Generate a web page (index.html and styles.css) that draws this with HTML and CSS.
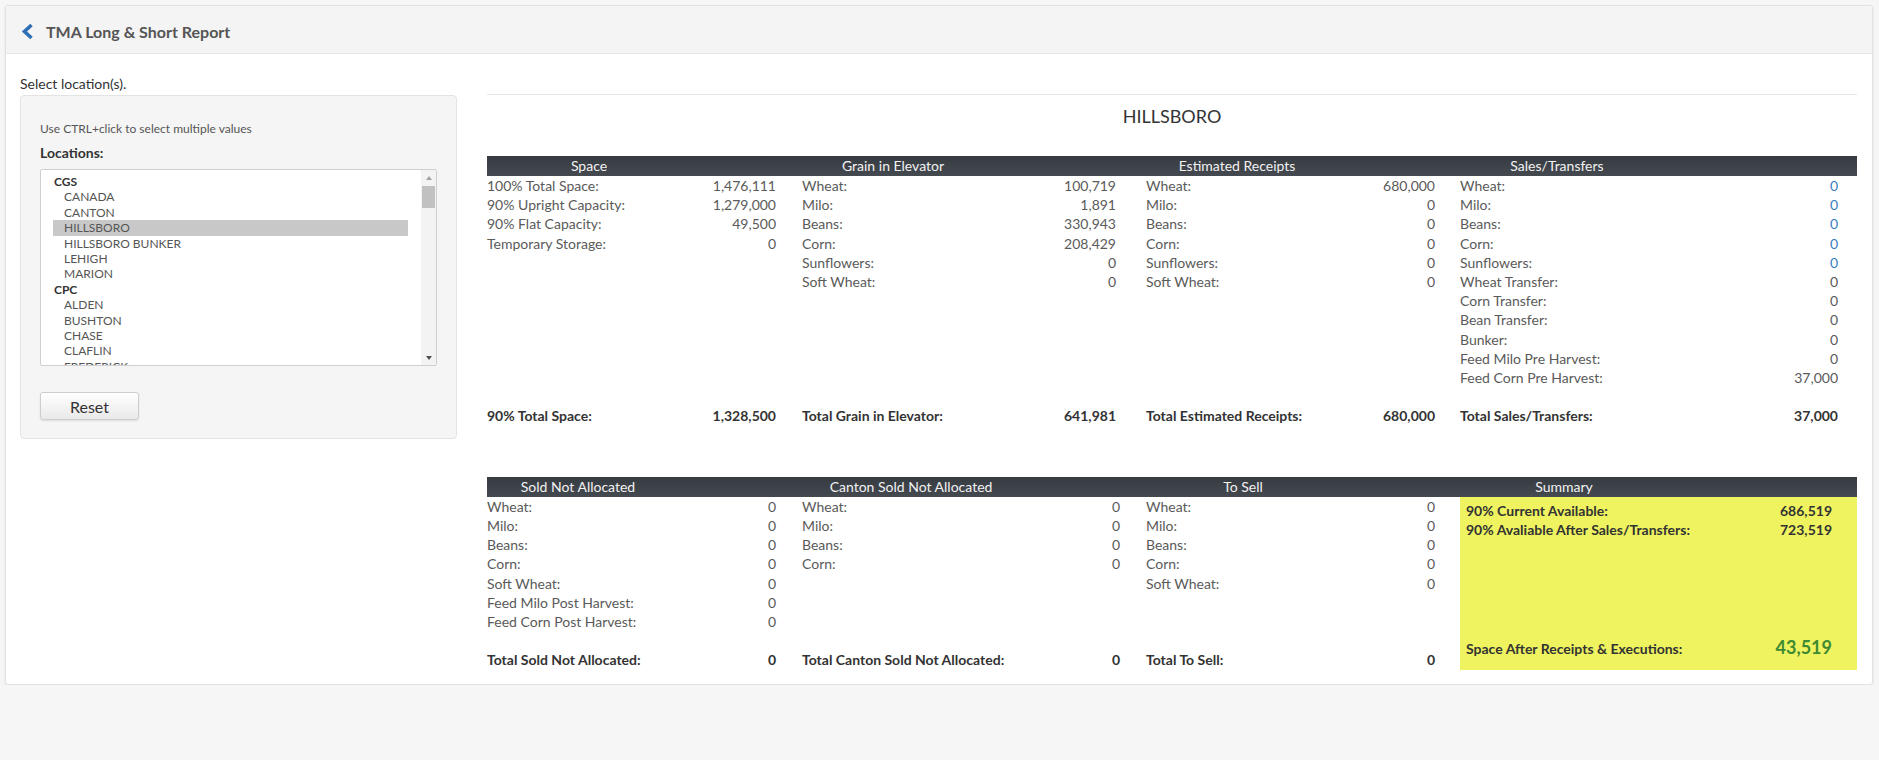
FILE: index.html
```html
<!DOCTYPE html>
<html>
<head>
<meta charset="utf-8">
<title>TMA Long &amp; Short Report</title>
<link rel="stylesheet" href="styles.css">
</head>
<body>
<div class="card">
  <div class="card-head">
    <svg class="back" width="13" height="17" viewBox="0 0 13 17"><polyline points="10.5,2 3.5,8.5 10.5,15" fill="none" stroke="#2e6fb5" stroke-width="3.6" stroke-linejoin="miter"/></svg>
    <span class="title">TMA Long &amp; Short Report</span>
  </div>
  <div class="card-body">
    <div class="left">
      <div class="sel-label">Select location(s).</div>
      <div class="panel">
        <div class="hint">Use CTRL+click to select multiple values</div>
        <div class="loc-label">Locations:</div>
        <div class="listbox">
          <div class="lb-list">
            <div class="og">CGS</div>
            <div class="opt">CANADA</div>
            <div class="opt">CANTON</div>
            <div class="opt sel">HILLSBORO</div>
            <div class="opt">HILLSBORO BUNKER</div>
            <div class="opt">LEHIGH</div>
            <div class="opt">MARION</div>
            <div class="og">CPC</div>
            <div class="opt">ALDEN</div>
            <div class="opt">BUSHTON</div>
            <div class="opt">CHASE</div>
            <div class="opt">CLAFLIN</div>
            <div class="opt">FREDERICK</div>
          </div>
          <div class="sb">
            <div class="sb-btn"><span class="tri-up"></span></div>
            <div class="sb-thumb"></div>
            <div class="sb-space"></div>
            <div class="sb-btn"><span class="tri-down"></span></div>
          </div>
        </div>
        <button class="reset">Reset</button>
      </div>
    </div>
    <div class="right">
      <div class="hr"></div>
      <div class="loc-title">HILLSBORO</div>

      <div class="rpt rpt-a">
        <div class="th"><span class="tt w204">Space</span></div>
        <div class="th"><span class="tt w182">Grain in Elevator</span></div>
        <div class="th"><span class="tt w182">Estimated Receipts</span></div>
        <div class="th"><span class="tt w194">Sales/Transfers</span></div>

        <div class="tb c1">
          <div class="r"><span>100% Total Space:</span><span>1,476,111</span></div>
          <div class="r"><span>90% Upright Capacity:</span><span>1,279,000</span></div>
          <div class="r"><span>90% Flat Capacity:</span><span>49,500</span></div>
          <div class="r"><span>Temporary Storage:</span><span>0</span></div>
        </div>
        <div class="tb c2">
          <div class="r"><span>Wheat:</span><span>100,719</span></div>
          <div class="r"><span>Milo:</span><span>1,891</span></div>
          <div class="r"><span>Beans:</span><span>330,943</span></div>
          <div class="r"><span>Corn:</span><span>208,429</span></div>
          <div class="r"><span>Sunflowers:</span><span>0</span></div>
          <div class="r"><span>Soft Wheat:</span><span>0</span></div>
        </div>
        <div class="tb c3">
          <div class="r"><span>Wheat:</span><span>680,000</span></div>
          <div class="r"><span>Milo:</span><span>0</span></div>
          <div class="r"><span>Beans:</span><span>0</span></div>
          <div class="r"><span>Corn:</span><span>0</span></div>
          <div class="r"><span>Sunflowers:</span><span>0</span></div>
          <div class="r"><span>Soft Wheat:</span><span>0</span></div>
        </div>
        <div class="tb c4">
          <div class="r"><span>Wheat:</span><span class="lnk">0</span></div>
          <div class="r"><span>Milo:</span><span class="lnk">0</span></div>
          <div class="r"><span>Beans:</span><span class="lnk">0</span></div>
          <div class="r"><span>Corn:</span><span class="lnk">0</span></div>
          <div class="r"><span>Sunflowers:</span><span class="lnk">0</span></div>
          <div class="r"><span>Wheat Transfer:</span><span>0</span></div>
          <div class="r"><span>Corn Transfer:</span><span>0</span></div>
          <div class="r"><span>Bean Transfer:</span><span>0</span></div>
          <div class="r"><span>Bunker:</span><span>0</span></div>
          <div class="r"><span>Feed Milo Pre Harvest:</span><span>0</span></div>
          <div class="r"><span>Feed Corn Pre Harvest:</span><span>37,000</span></div>
        </div>

        <div class="tf c1"><span>90% Total Space:</span><span>1,328,500</span></div>
        <div class="tf c2"><span>Total Grain in Elevator:</span><span>641,981</span></div>
        <div class="tf c3"><span>Total Estimated Receipts:</span><span>680,000</span></div>
        <div class="tf c4"><span>Total Sales/Transfers:</span><span>37,000</span></div>
      </div>

      <div class="rpt rpt-b">
        <div class="th"><span class="tt w182">Sold Not Allocated</span></div>
        <div class="th"><span class="tt w218">Canton Sold Not Allocated</span></div>
        <div class="th"><span class="tt w194">To Sell</span></div>
        <div class="th"><span class="tt w208">Summary</span></div>

        <div class="tb c1">
          <div class="r"><span>Wheat:</span><span>0</span></div>
          <div class="r"><span>Milo:</span><span>0</span></div>
          <div class="r"><span>Beans:</span><span>0</span></div>
          <div class="r"><span>Corn:</span><span>0</span></div>
          <div class="r"><span>Soft Wheat:</span><span>0</span></div>
          <div class="r"><span>Feed Milo Post Harvest:</span><span>0</span></div>
          <div class="r"><span>Feed Corn Post Harvest:</span><span>0</span></div>
        </div>
        <div class="tb c2b">
          <div class="r"><span>Wheat:</span><span>0</span></div>
          <div class="r"><span>Milo:</span><span>0</span></div>
          <div class="r"><span>Beans:</span><span>0</span></div>
          <div class="r"><span>Corn:</span><span>0</span></div>
        </div>
        <div class="tb c3">
          <div class="r"><span>Wheat:</span><span>0</span></div>
          <div class="r"><span>Milo:</span><span>0</span></div>
          <div class="r"><span>Beans:</span><span>0</span></div>
          <div class="r"><span>Corn:</span><span>0</span></div>
          <div class="r"><span>Soft Wheat:</span><span>0</span></div>
        </div>
        <div class="summary">
          <div class="s-row"><span>90% Current Available:</span><span>686,519</span></div>
          <div class="s-row"><span>90% Avaliable After Sales/Transfers:</span><span>723,519</span></div>
          <div class="s-row s-big"><span>Space After Receipts &amp; Executions:</span><span class="green">43,519</span></div>
        </div>

        <div class="tf c1"><span>Total Sold Not Allocated:</span><span>0</span></div>
        <div class="tf c2b"><span>Total Canton Sold Not Allocated:</span><span>0</span></div>
        <div class="tf c3"><span>Total To Sell:</span><span>0</span></div>
      </div>
    </div>
  </div>
</div>
</body>
</html>
```

FILE: styles.css
```css
* { box-sizing: border-box; }

body {
  margin: 0;
  padding: 5px 6px 0 5px;
  background: #f6f6f6;
  font-family: Lato, "Open Sans", "Liberation Sans", sans-serif;
  color: #555;
}

.card {
  background: #fff;
  border: 1px solid #e2e2e2;
  border-radius: 3px;
  box-shadow: 0 1px 3px rgba(0, 0, 0, 0.08);
}

.card-head {
  height: 48px;
  padding: 4px 0 0 15px;
  background: #f4f4f4;
  border-bottom: 1px solid #e5e5e5;
  display: flex;
  align-items: center;
  gap: 12px;
}

.back { display: block; }

.title {
  font-size: 16px;
  font-weight: 700;
  color: #555;
}

.card-body {
  display: flex;
  gap: 30px;
  padding: 20px 15px 14px 14px;
}

.left { width: 437px; flex: none; }

.sel-label {
  font-size: 14px;
  line-height: 20px;
  color: #333;
  margin-bottom: 1px;
}

.panel {
  border: 1px solid #e3e3e3;
  background: #f5f5f5;
  border-radius: 4px;
  padding: 25px 19px 18px;
}

.hint {
  font-size: 12px;
  line-height: 15px;
  color: #555;
}

.loc-label {
  font-size: 14px;
  font-weight: 700;
  line-height: 18px;
  color: #333;
  margin-top: 8px;
}

.listbox {
  margin-top: 7px;
  height: 197px;
  border: 1px solid #cfcfcf;
  border-radius: 2px;
  background: #fff;
  display: flex;
}

.lb-list {
  flex: 1;
  overflow: hidden;
  padding: 4px 13px 0 12px;
  font-size: 12px;
}

.og {
  height: 15.4px;
  line-height: 15.4px;
  padding-left: 1px;
  font-weight: 700;
  color: #333;
}

.opt {
  height: 15.4px;
  line-height: 15.4px;
  padding-left: 11px;
  color: #555;
  white-space: nowrap;
}

.opt.sel { background: #c8c8c8; }

.sb {
  width: 15px;
  flex: none;
  background: #f3f3f3;
  display: flex;
  flex-direction: column;
}

.sb-btn {
  height: 15px;
  display: flex;
  align-items: center;
  justify-content: center;
}

.tri-up {
  width: 0;
  height: 0;
  border-left: 3.5px solid transparent;
  border-right: 3.5px solid transparent;
  border-bottom: 4px solid #a3a3a3;
}

.tri-down {
  width: 0;
  height: 0;
  border-left: 3.5px solid transparent;
  border-right: 3.5px solid transparent;
  border-top: 4px solid #505050;
}

.sb-thumb {
  margin: 1px 1px 0 1px;
  height: 22px;
  background: #c1c1c1;
}

.sb-space { flex: 1; }

.reset {
  display: block;
  margin-top: 26px;
  width: 99px;
  height: 28px;
  border: 1px solid #cdcdcd;
  border-radius: 3px;
  background: linear-gradient(#ffffff, #e9e9e9);
  box-shadow: 0 1px 2px rgba(0, 0, 0, 0.1);
  font-family: Lato, "Open Sans", sans-serif;
  font-size: 16px;
  color: #333;
  padding: 0;
}

.right {
  flex: 1;
  padding-top: 20px;
}

.hr { border-top: 1px solid #e5e5e5; }

.loc-title {
  margin-top: 9px;
  text-align: center;
  font-size: 18px;
  line-height: 24px;
  color: #333;
}

.rpt {
  display: grid;
  grid-template-columns: 315px 344px 314px 397px;
  font-size: 14px;
}

.rpt-a { margin-top: 28px; }
.rpt-b { margin-top: 51.4px; }

.th {
  height: 20px;
  background: linear-gradient(#363a41, #454950);
}

.tt {
  display: block;
  text-align: center;
  color: #f2f2f2;
  line-height: 20px;
  white-space: nowrap;
}

.w182 { width: 182px; }
.w194 { width: 194px; }
.w204 { width: 204px; }
.w208 { width: 208px; }
.w218 { width: 218px; }

.tb { padding-bottom: 19.2px; }

.r, .tf {
  display: flex;
  justify-content: space-between;
  height: 19.2px;
  line-height: 19.2px;
  white-space: nowrap;
}

.r { color: #5a5a5a; }

.tf {
  font-weight: 700;
  color: #333;
}

.c1 { padding-right: 26px; }
.c2 { padding-right: 30px; }
.c2b { padding-right: 26px; }
.c3 { padding-right: 25px; }
.c4 { padding-right: 19px; }

.lnk { color: #3a7dc0; }

.summary {
  grid-column: 4;
  grid-row: 2 / span 2;
  background: #eff35f;
  padding: 4px 25px 12px 6px;
  display: flex;
  flex-direction: column;
  font-weight: 700;
  color: #333;
}

.s-row {
  display: flex;
  justify-content: space-between;
  line-height: 19px;
  white-space: nowrap;
}

.s-big {
  margin-top: auto;
  align-items: baseline;
}

.green {
  color: #3e8a33;
  font-size: 18px;
  line-height: 22px;
}
```
